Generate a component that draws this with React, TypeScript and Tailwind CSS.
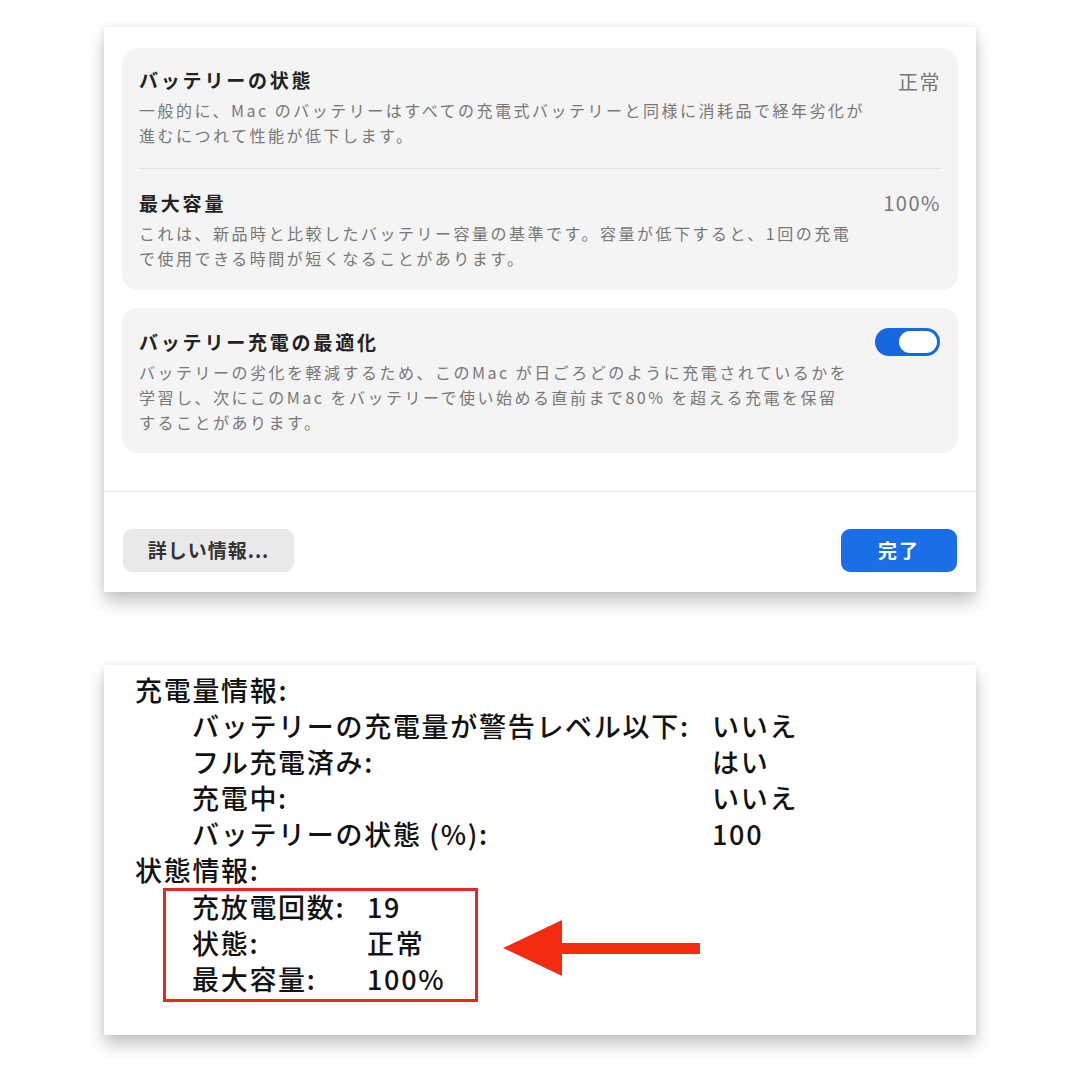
import type { ReactNode } from 'react';

const jp = "font-['Noto_Sans_CJK_JP','Noto_Sans',sans-serif]";

function SettingRow({ title, value, lines }: { title: string; value?: ReactNode; lines: string[] }) {
  return (
    <div className="flex items-start justify-between">
      <div>
        <div className="text-[19px] leading-6 font-bold tracking-[2.8px] text-[#222]">{title}</div>
        <div className="mt-[6px] text-[16px] leading-[25px] tracking-[2.5px] text-[#777] whitespace-nowrap">
          {lines.map((l) => (
            <div key={l}>{l}</div>
          ))}
        </div>
      </div>
      {value}
    </div>
  );
}

function Toggle() {
  return (
    <div className="mt-[-2px] flex h-[28px] w-[65px] items-center justify-end rounded-full bg-[#1767e2] px-[3px]">
      <div className="h-[22px] w-[38px] rounded-full bg-white" />
    </div>
  );
}

export default function App() {
  return (
    <div className={`min-h-[1080px] w-[1080px] bg-white ${jp}`}>
      {/* settings sheet */}
      <div className="pt-[27px] pl-[104px]">
        <div className="w-[872px] bg-white shadow-[0_10px_16px_rgba(0,0,0,0.22),0_0_8px_rgba(0,0,0,0.07)]">
          <div className="px-[18px] pt-[21px]">
            <div className="rounded-[16px] bg-[#f4f4f4] px-[17px]">
              <div className="pt-[20px] pb-[20px]">
                <SettingRow
                  title="バッテリーの状態"
                  value={<div className="pt-[2px] text-[20px] leading-6 tracking-[1.5px] text-[#777]">正常</div>}
                  lines={[
                    '一般的に、Mac のバッテリーはすべての充電式バッテリーと同様に消耗品で経年劣化が',
                    '進むにつれて性能が低下します。',
                  ]}
                />
              </div>
              <div className="h-px bg-[#e3e3e3]" />
              <div className="pt-[22px] pb-[19px]">
                <SettingRow
                  title="最大容量"
                  value={<div className="text-[20px] leading-6 tracking-[1.5px] text-[#777]">100%</div>}
                  lines={[
                    'これは、新品時と比較したバッテリー容量の基準です。容量が低下すると、1回の充電',
                    'で使用できる時間が短くなることがあります。',
                  ]}
                />
              </div>
            </div>

            <div className="mt-[18px] rounded-[16px] bg-[#f4f4f4] pl-[17px] pr-[18px] pt-[22px] pb-[18px]">
              <SettingRow
                title="バッテリー充電の最適化"
                value={<Toggle />}
                lines={[
                  'バッテリーの劣化を軽減するため、このMac が日ごろどのように充電されているかを',
                  '学習し、次にこのMac をバッテリーで使い始める直前まで80% を超える充電を保留',
                  'することがあります。',
                ]}
              />
            </div>
          </div>

          <div className="mt-[38px] h-px bg-[#e6e6e6]" />

          <div className="flex items-center justify-between px-[19px] pt-[37px] pb-[20px]">
            <button className="h-[43px] w-[171px] rounded-[9px] bg-[#e9e9e9] text-[19px] font-bold tracking-[1px] text-[#333]">
              詳しい情報...
            </button>
            <button className="h-[43px] w-[116px] rounded-[9px] bg-[#1a6ee8] text-[19px] font-bold tracking-[2px] text-white">
              完了
            </button>
          </div>
        </div>
      </div>

      {/* system report excerpt */}
      <div className="pt-[73px] pl-[104px]">
        <div className="relative h-[370px] w-[872px] bg-white pl-[31px] pt-[7px] text-[27px] leading-[36px] font-medium tracking-[1.7px] text-[#111] shadow-[0_10px_16px_rgba(0,0,0,0.22),0_0_8px_rgba(0,0,0,0.07)]">
          <div>充電量情報:</div>
          <div className="grid grid-cols-[520px_auto] pl-[57px]">
            <div>バッテリーの充電量が警告レベル以下:</div>
            <div>いいえ</div>
            <div>フル充電済み:</div>
            <div>はい</div>
            <div>充電中:</div>
            <div>いいえ</div>
            <div>バッテリーの状態 (%):</div>
            <div>100</div>
          </div>
          <div>状態情報:</div>
          <div className="ml-[28px] w-[315px] border-[3px] border-[#e8281e] pl-[26px]">
            <div className="grid grid-cols-[175px_auto] -mt-[2px] pb-[2px]">
              <div>充放電回数:</div>
              <div>19</div>
              <div>状態:</div>
              <div>正常</div>
              <div>最大容量:</div>
              <div>100%</div>
            </div>
          </div>

          <svg className="absolute left-[399px] top-[255px]" width="197" height="56" viewBox="0 0 197 56">
            <polygon points="0,28 59,0 59,56" fill="#f52a12" />
            <rect x="58" y="23" width="139" height="11" fill="#f52a12" />
          </svg>
        </div>
      </div>
    </div>
  );
}
